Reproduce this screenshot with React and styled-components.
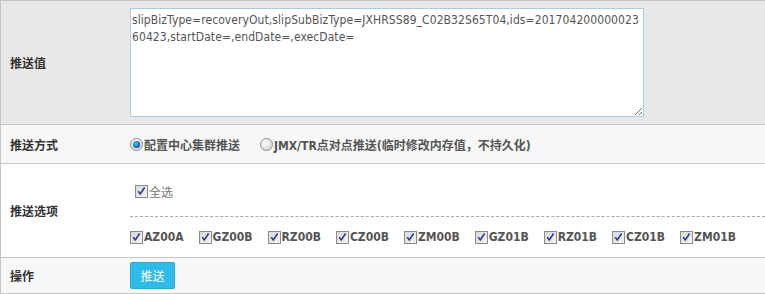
import styled, { createGlobalStyle } from 'styled-components';

const GlobalStyle = createGlobalStyle`
  body {
    margin: 0;
    background: #fff;
    font-family: "DejaVu Sans Condensed", "Noto Sans CJK SC", sans-serif;
    font-size: 12px;
  }
`;

const rowColor = (props) => {
  const { tone } = props;
  switch (tone) {
    case 'gray':
      return '#e8e8e8';
    case 'light':
      return '#f7f7f7';
    default:
      return '#ffffff';
  }
};

const Form = styled.div`
  width: 765px;
  box-sizing: border-box;
  border-top: 1px solid #c6c6c6;
  border-left: 1px solid #c6c6c6;
`;

const Row = styled.div`
  display: flex;
  align-items: center;
  height: ${({ h }) => h}px;
  background: ${props => rowColor(props)};
  border-bottom: 1px solid #c6c6c6;
`;

const Label = styled.div`
  width: 111px;
  padding-left: 9px;
  font-family: "DejaVu Sans Condensed", "Noto Sans CJK SC", sans-serif;
  font-size: 12px;
  font-weight: bold;
  color: #333;
`;

const Field = styled.div`
  flex: 1;
  min-width: 0;
  padding-left: 9px;
  align-self: stretch;
  display: flex;
  flex-direction: column;
  justify-content: center;
`;

const TextBox = styled.textarea`
  display: block;
  box-sizing: border-box;
  width: 514px;
  height: 109px;
  margin: 0;
  padding: 3px 1px;
  border: 1px solid #a9cbe3;
  border-radius: 0;
  font-family: "DejaVu Sans Condensed", "Noto Sans CJK SC", sans-serif;
  font-size: 12px;
  letter-spacing: 0.08px;
  line-height: 17px;
  color: #555;
  outline: none;
  background: #fff;
`;

const RadioGroup = styled.div`
  display: flex;
  align-items: center;
  gap: 20px;
`;

const Choice = styled.label`
  display: inline-flex;
  align-items: center;
  font-family: "DejaVu Sans Condensed", "Noto Sans CJK SC", sans-serif;
  font-size: 12px;
  font-weight: ${({ plain }) => (plain ? 'normal' : 'bold')};
  color: ${({ plain }) => (plain ? '#777' : '#555')};
  white-space: nowrap;
  cursor: default;

  svg {
    flex: none;
    margin-right: 1px;
  }
`;

const Options = styled.div`
  padding: 17px 0 10px;
`;

const AllLine = styled.div`
  display: flex;
  align-items: center;
  height: 20px;
  padding-left: 5px;
  padding-bottom: 15px;
  border-bottom: 1px dashed #aaa;
`;

const Zones = styled.div`
  display: flex;
  align-items: center;
  gap: 15px;
  height: 20px;
  margin-top: 10px;
`;

const PushButton = styled.button`
  width: 45px;
  height: 27px;
  padding: 0;
  border: 1px solid #26a9d8;
  border-radius: 2px;
  background: #31bbe9;
  color: #fff;
  font-family: "DejaVu Sans Condensed", "Noto Sans CJK SC", sans-serif;
  font-size: 12px;
`;

const CheckMark = () => (
  <svg width="13" height="13" viewBox="0 0 13 13">
    <defs>
      <linearGradient id="cbg" x1="0" y1="0" x2="1" y2="1">
        <stop offset="0" stopColor="#d6d6d6" />
        <stop offset="1" stopColor="#f7f7f7" />
      </linearGradient>
    </defs>
    <rect x="0.5" y="0.5" width="12" height="12" fill="url(#cbg)" stroke="#8a8a8a" />
    <path d="M3.2 6.3 L5.3 8.9 L9.6 2.6" fill="none" stroke="#2c3f93" strokeWidth="1.7" />
  </svg>
);

const RadioMark = ({ on }) => (
  <svg width="13" height="13" viewBox="0 0 13 13">
    <defs>
      <radialGradient id="rbg" cx="0.35" cy="0.35" r="0.8">
        <stop offset="0" stopColor="#ffffff" />
        <stop offset="1" stopColor="#cfcfcf" />
      </radialGradient>
      <radialGradient id="rdot" cx="0.4" cy="0.4" r="0.7">
        <stop offset="0" stopColor="#5cc0f5" />
        <stop offset="0.6" stopColor="#1a78c4" />
        <stop offset="1" stopColor="#0c2f5a" />
      </radialGradient>
    </defs>
    <circle cx="6.5" cy="6.5" r="6" fill="url(#rbg)" stroke="#8e8e8e" />
    {on && <circle cx="6.5" cy="6.5" r="3.6" fill="url(#rdot)" />}
  </svg>
);

const zones = ['AZ00A', 'GZ00B', 'RZ00B', 'CZ00B', 'ZM00B', 'GZ01B', 'RZ01B', 'CZ01B', 'ZM01B'];

const value = 'slipBizType=recoveryOut,slipSubBizType=JXHRSS89_C02B32S65T04,ids=20170420000002360423,startDate=,endDate=,execDate=';

const App = () => (
  <>
    <GlobalStyle />
    <Form>
      <Row tone="gray" h={123}>
        <Label>推送值</Label>
        <Field>
          <TextBox defaultValue={value} spellCheck={false} />
        </Field>
      </Row>
      <Row tone="light" h={38}>
        <Label>推送方式</Label>
        <Field>
          <RadioGroup>
            <Choice><RadioMark on />配置中心集群推送</Choice>
            <Choice><RadioMark />JMX/TR点对点推送(临时修改内存值，不持久化)</Choice>
          </RadioGroup>
        </Field>
      </Row>
      <Row h={93}>
        <Label>推送选项</Label>
        <Field>
          <Options>
            <AllLine>
              <Choice plain><CheckMark />全选</Choice>
            </AllLine>
            <Zones>
              {zones.map(z => (
                <Choice key={z}><CheckMark />{z}</Choice>
              ))}
            </Zones>
          </Options>
        </Field>
      </Row>
      <Row tone="light" h={35}>
        <Label>操作</Label>
        <Field>
          <div><PushButton type="button">推送</PushButton></div>
        </Field>
      </Row>
    </Form>
  </>
);

export default App;
